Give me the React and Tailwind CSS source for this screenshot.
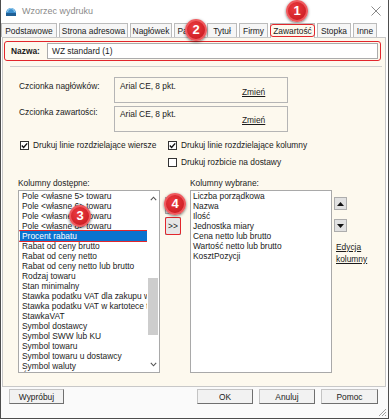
import React from "react";

const left = [
  "Pole <własne 5> towaru",
  "Pole <własne 6> towaru",
  "Pole <własne 7> towaru",
  "Pole <własne 8> towaru",
  "Procent rabatu",
  "Rabat od ceny brutto",
  "Rabat od ceny netto",
  "Rabat od ceny netto lub brutto",
  "Rodzaj towaru",
  "Stan minimalny",
  "Stawka podatku VAT dla zakupu w kartotece",
  "Stawka podatku VAT w kartotece towaru",
  "StawkaVAT",
  "Symbol dostawcy",
  "Symbol SWW lub KU",
  "Symbol towaru",
  "Symbol towaru u dostawcy",
  "Symbol waluty",
  "Średnia cena zakupu netto",
];

const right = [
  "Liczba porządkowa",
  "Nazwa",
  "Ilość",
  "Jednostka miary",
  "Cena netto lub brutto",
  "Wartość netto lub brutto",
  "KosztPozycji",
];

const tabs = [
  ["Podstawowe", "w-[56px]"],
  ["Strona adresowa", "w-[69px]"],
  ["Nagłówek", "w-[42px]"],
  ["Papier", "w-[31px]"],
  ["Tytuł", "w-[30px]"],
  ["Firmy", "w-[29px]"],
  ["Zawartość", "w-[45px]"],
  ["Stopka", "w-[34px]"],
  ["Inne", "w-[24px]"],
];

const Badge = ({ n, className }) => (
  <div
    className={`absolute flex h-[22px] w-[22px] items-center justify-center rounded-full border-[2px] border-[#ee5a5e] bg-[radial-gradient(circle_at_40%_35%,#ec3b40,#c4161c)] text-[13px] font-bold text-white shadow-[0_1px_3px_rgba(0,0,0,0.55)] ${className}`}
  >
    {n}
  </div>
);

const Check = ({ on }) => (
  <div className="flex h-[9px] w-[9px] items-center justify-center border border-[#333] bg-white">
    {on && (
      <svg width="7" height="7" viewBox="0 0 7 7">
        <path d="M0.8 3.6 L2.6 5.4 L6.2 1.4" fill="none" stroke="#111" strokeWidth="1.4" />
      </svg>
    )}
  </div>
);

const Btn = ({ children, className }) => (
  <div
    className={`flex h-[15px] items-center justify-center border border-[#c4c4c4] border-b-[#6f6f6f] border-r-[#6f6f6f] bg-[#f2f2f2] ${className}`}
  >
    {children}
  </div>
);

const FontBox = ({ className }) => (
  <div className={`flex h-[26px] w-[174px] flex-col border border-[#b5b5b5] pl-[5px] ${className}`}>
    <span>Arial CE, 8 pkt.</span>
    <span className="-mt-[4px] ml-[122px] underline">Zmień</span>
  </div>
);

export default function App() {
  return (
    <div className="relative flex h-[419px] w-[389px] flex-col overflow-hidden border-x border-b border-[#4d4d4d] bg-white font-['Liberation_Sans',Arial,sans-serif] text-[8.4px] leading-[10px] text-[#1b1b1b]">
      {/* title bar */}
      <div className="flex h-[22px] items-center pl-[4px]">
        <svg width="12" height="11" viewBox="0 0 12 11">
          <path d="M1 7 A5 5 0 0 1 11 7 Z" fill="#3b8fcf" />
          <path d="M2.5 6 A3.5 3.5 0 0 1 9.5 6" fill="none" stroke="#9fd3f2" strokeWidth="1" />
          <rect x="1" y="7" width="10" height="3" fill="#1f5f95" />
        </svg>
        <span className="ml-[5px] text-[9px] text-[#8a8a8a]">Wzorzec wydruku</span>
        <svg className="ml-auto mr-[7px]" width="10" height="10" viewBox="0 0 10 10">
          <path d="M0.5 0.5 L9.5 9.5 M9.5 0.5 L0.5 9.5" stroke="#8a8a8a" strokeWidth="1" />
        </svg>
      </div>

      {/* tabs */}
      <div className="flex h-[15px] items-end gap-[2px]">
        {tabs.map(([t, w]) => {
          const sel = t === "Zawartość";
          return (
            <div
              key={t}
              className={`flex h-[14px] items-center justify-center border border-b-0 border-[#bcbcbc] ${w} ${
                sel ? "relative z-10 -mb-px h-[15px] bg-[#fdf9ee]" : "bg-[#f6f6f6]"
              }`}
            >
              {sel && (
                <div className="absolute -inset-x-[1px] top-[0px] bottom-[1px] rounded-[3px] border-[1.5px] border-[#e2262c]" />
              )}
              {t}
            </div>
          );
        })}
      </div>

      {/* panel */}
      <div className="ml-[1px] flex h-[350px] w-[384px] flex-col border border-[#c8c8c8] bg-[#fdf9ee]">
        <div className="ml-[1px] mt-[3px] flex h-[20px] w-[377px] items-center rounded-[3px] border-[1.5px] border-[#e2262c]">
          <span className="w-[42px] pl-[6px] font-bold">Nazwa:</span>
          <div className="flex h-[16px] flex-1 items-center border border-[#ababab] bg-white pl-[4px]">
            WZ standard (1)
          </div>
          <div className="w-[2px]" />
        </div>

        <div className="ml-[7px] mt-[5px] h-[2px] w-[372px] border-t border-[#cfcfcf] border-b-white" />

        {/* fonts */}
        <div className="ml-[16px] mt-[9px] flex">
          <span className="w-[95px] pt-[4px]">Czcionka nagłówków:</span>
          <FontBox className="pt-[3px]" />
        </div>
        <div className="ml-[16px] mt-[3px] flex">
          <span className="w-[95px] pt-[1px]">Czcionka zawartości:</span>
          <FontBox className="h-[25px] pt-[2px]" />
        </div>

        {/* checkboxes */}
        <div className="ml-[17px] mt-[8px] flex h-[10px] items-center">
          <Check on />
          <span className="ml-[4px] w-[135px]">Drukuj linie rozdzielające wiersze</span>
          <Check on />
          <span className="ml-[4px]">Drukuj linie rozdzielające kolumny</span>
        </div>
        <div className="ml-[165px] mt-[7px] flex h-[10px] items-center">
          <Check />
          <span className="ml-[4px]">Drukuj rozbicie na dostawy</span>
        </div>

        {/* lists */}
        <div className="ml-[15px] mt-[11px] flex">
          <div className="flex flex-col">
            <span className="h-[12px]">Kolumny dostępne:</span>
            <div className="flex h-[183px] w-[142px] overflow-hidden border border-[#a9a9a9] bg-white">
              <div className="flex flex-1 flex-col overflow-hidden">
                {left.map((t) => {
                  const sel = t === "Procent rabatu";
                  return (
                    <div
                      key={t}
                      className={`relative ml-[1px] h-[10px] shrink-0 whitespace-nowrap px-[2px] ${
                        sel ? "bg-[#0a73cf] text-white" : ""
                      }`}
                    >
                      {sel && (
                        <div className="absolute -inset-x-[2px] -inset-y-[1px] rounded-[2px] border-[1.5px] border-[#e2262c]" />
                      )}
                      {t}
                    </div>
                  );
                })}
              </div>
              <div className="flex w-[12px] flex-col items-center bg-white">
                <div className="flex h-[15px] items-center">
                  <svg width="7" height="5" viewBox="0 0 7 5">
                    <path d="M0.8 4.2 L3.5 1.2 L6.2 4.2" fill="none" stroke="#555" strokeWidth="1.1" />
                  </svg>
                </div>
                <div className="mt-[72px] h-[57px] w-[10px] bg-[#cdcdcd]" />
                <div className="mt-auto flex h-[15px] items-center">
                  <svg width="7" height="5" viewBox="0 0 7 5">
                    <path d="M0.8 0.8 L3.5 3.8 L6.2 0.8" fill="none" stroke="#555" strokeWidth="1.1" />
                  </svg>
                </div>
              </div>
            </div>
          </div>

          <div className="ml-[5px] flex flex-col pt-[19px]">
            <div className="flex h-[17px] w-[16px] items-center justify-center border border-[#adadad] bg-[#e6e6e6]">
              &lt;&lt;
            </div>
            <div className="relative mt-[3px] flex h-[18px] w-[16px] items-center justify-center border border-[#adadad] bg-[#e6e6e6]">
              <div className="absolute -inset-[1px] rounded-[2px] border-[1.5px] border-[#e2262c]" />
              &gt;&gt;
            </div>
          </div>

          <div className="ml-[9px] flex flex-col">
            <span className="h-[12px]">Kolumny wybrane:</span>
            <div className="flex h-[183px] w-[142px] flex-col border border-[#a9a9a9] bg-white pl-[2px]">
              {right.map((t) => (
                <div key={t} className="h-[10px] whitespace-nowrap">
                  {t}
                </div>
              ))}
            </div>
          </div>

          <div className="ml-[2px] flex flex-col pt-[19px]">
            <div className="flex h-[13px] w-[13px] items-center justify-center border border-[#adadad] bg-[#e1e1e1]">
              <svg width="7" height="4" viewBox="0 0 7 4">
                <path d="M0 4 L3.5 0 L7 4 Z" fill="#111" />
              </svg>
            </div>
            <div className="mt-[9px] flex h-[13px] w-[13px] items-center justify-center border border-[#adadad] bg-[#e1e1e1]">
              <svg width="7" height="4" viewBox="0 0 7 4">
                <path d="M0 0 L3.5 4 L7 0 Z" fill="#111" />
              </svg>
            </div>
            <div className="ml-[2px] mt-[9px] flex flex-col leading-[12px] underline whitespace-nowrap">
              <span>Edycja</span>
              <span>kolumny</span>
            </div>
          </div>
        </div>
      </div>

      {/* bottom buttons */}
      <div className="flex flex-1 items-start bg-[#fafafa] pt-[2px]">
        <Btn className="ml-[8px] w-[55px]">Wypróbuj</Btn>
        <Btn className="ml-auto w-[56px]">OK</Btn>
        <Btn className="ml-[6px] w-[56px]">Anuluj</Btn>
        <Btn className="ml-[6px] mr-[10px] w-[57px]">Pomoc</Btn>
      </div>
      <svg className="absolute bottom-[1px] right-[1px]" width="10" height="10" viewBox="0 0 10 10">
        <path d="M9 2 L2 9 M9 5 L5 9 M9 8 L8 9" stroke="#a0a0a0" strokeWidth="1" />
      </svg>

      <Badge n="1" className="left-[285px] top-[0px]" />
      <Badge n="2" className="left-[184px] top-[19px]" />
      <Badge n="3" className="left-[68px] top-[205px]" />
      <Badge n="4" className="left-[163px] top-[193px]" />
    </div>
  );
}
